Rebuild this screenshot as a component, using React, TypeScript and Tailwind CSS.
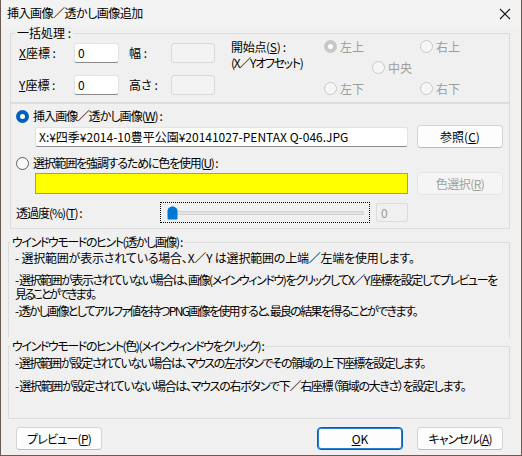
import React from "react";

function Radio({ checked, disabled }: { checked?: boolean; disabled?: boolean }) {
  if (disabled) {
    return checked ? (
      <span className="w-[13px] h-[13px] rounded-full bg-[#c8c8c8] flex items-center justify-center shrink-0">
        <span className="w-[5px] h-[5px] rounded-full bg-white" />
      </span>
    ) : (
      <span className="w-[13px] h-[13px] rounded-full border border-[#c8c8c8] bg-[#f6f6f6] shrink-0" />
    );
  }
  return checked ? (
    <span className="w-[13px] h-[13px] rounded-full bg-[#005fb8] flex items-center justify-center shrink-0">
      <span className="w-[5px] h-[5px] rounded-full bg-white" />
    </span>
  ) : (
    <span className="w-[13px] h-[13px] rounded-full border border-[#5f5f5f] bg-[#f9f9f9] shrink-0" />
  );
}

function DRadio({ label, checked }: { label: string; checked?: boolean }) {
  return (
    <div className="flex items-center gap-[3px] h-[21px] text-[#9d9d9d]">
      <Radio disabled checked={checked} />
      <span>{label}</span>
    </div>
  );
}

function Btn({ children, w = "w-[86px]", disabled, primary }: { children: React.ReactNode; w?: string; disabled?: boolean; primary?: boolean }) {
  let cls = "h-[23px] rounded-[4px] flex items-center justify-center text-[12px] shrink-0 " + w + " ";
  if (disabled) cls += "border border-[#e5e5e5] bg-[#f5f5f5] text-[#a0a0a0]";
  else if (primary) cls += "border border-[#005fb8] shadow-[inset_0_0_0_1px_#2a7fd0] bg-[#fdfdfd] text-black";
  else cls += "border border-[#d5d5d5] border-b-[#bcbcbc] bg-[#fdfdfd] text-black";
  return <div className={cls}>{children}</div>;
}

export default function App() {
  return (
    <div className="w-[522px] h-[456px] bg-[#f0f0f0] border-x border-b border-[#6b5b52] flex flex-col text-[12px] text-black font-['Noto_Sans_CJK_JP',sans-serif] [font-feature-settings:'palt'] overflow-hidden">
      {/* title bar */}
      <div className="h-[25px] bg-[#f3f3f3] flex items-start justify-between shrink-0">
        <div className="pl-[6px] pt-[5px] leading-[16px] tracking-[-0.5px]">挿入画像／透かし画像追加</div>
        <svg width="12" height="12" viewBox="0 0 12 12" className="mt-[8px] mr-[10px]">
          <path d="M1 1 L11 11 M11 1 L1 11" stroke="#1a1a1a" strokeWidth="1.1" />
        </svg>
      </div>

      {/* group 1 */}
      <fieldset className="mx-[9px] w-[500px] border border-[#dcdcdc] h-[78px] shrink-0">
        <legend className="ml-[4px] px-[2px] leading-[16px]">一括処理 :</legend>
        <div className="flex pl-[8px]">
          <div className="flex flex-col gap-[12px] pt-[2px]">
            <div className="flex items-center">
              <span className="w-[55px]"><u>X</u>座標 :</span>
              <div className="w-[45px] h-[20px] bg-white border border-[#e3e3e3] border-b-[#8a8a8a] rounded-[3px] pl-[3px] flex items-center">0</div>
              <span className="w-[42px] ml-[10px]">幅 :</span>
              <div className="w-[44px] h-[20px] border border-[#d9d9d9] bg-[#f3f3f3] rounded-[3px]" />
            </div>
            <div className="flex items-center">
              <span className="w-[55px]"><u>Y</u>座標 :</span>
              <div className="w-[45px] h-[20px] bg-white border border-[#e3e3e3] border-b-[#8a8a8a] rounded-[3px] pl-[3px] flex items-center">0</div>
              <span className="w-[42px] ml-[10px]">高さ :</span>
              <div className="w-[44px] h-[20px] border border-[#d9d9d9] bg-[#f3f3f3] rounded-[3px]" />
            </div>
          </div>
          <div className="w-[93px] ml-[16px] leading-[16px] -mt-[2px] whitespace-nowrap">
            <div className="tracking-[-0.3px]">開始点(<u>S</u>) :</div>
            <div className="tracking-[-1.3px]">(X／Yオフセット)</div>
          </div>
          <div className="grid grid-cols-[48px_48px_60px] -mt-[5px]">
            <DRadio label="左上" checked />
            <div />
            <DRadio label="右上" />
            <div />
            <DRadio label="中央" />
            <div />
            <DRadio label="左下" />
            <div />
            <DRadio label="右下" />
          </div>
        </div>
      </fieldset>

      {/* group 2 */}
      <div className="mx-[9px] w-[500px] border border-[#dcdcdc] h-[126px] shrink-0 pt-[4px] pl-[5px]">
        <div className="flex items-center gap-[4px] h-[16px]">
          <Radio checked />
          <span className="tracking-[-0.9px]">挿入画像／透かし画像(<u>W</u>) :</span>
        </div>
        <div className="flex items-center mt-[1px] h-[23px] pl-[19px]">
          <div className="w-[373px] h-[20px] bg-white border border-[#e3e3e3] border-b-[#8a8a8a] rounded-[3px] pl-[3px] flex items-center whitespace-nowrap overflow-hidden">
            X:¥四季¥2014-10豊平公園¥20141027-PENTAX Q-046.JPG
          </div>
          <div className="ml-[9px]">
            <Btn>参照(<u>C</u>)</Btn>
          </div>
        </div>
        <div className="flex items-center gap-[4px] h-[16px] mt-[7px]">
          <Radio />
          <span className="tracking-[-1.2px]">選択範囲を強調するために色を使用(<u>U</u>) :</span>
        </div>
        <div className="flex items-center mt-[1px] h-[23px] pl-[19px]">
          <div className="w-[373px] h-[21px] bg-[#ffff00] border border-[#9a9a9a]" />
          <div className="ml-[9px]">
            <Btn disabled><span className="tracking-[-0.5px]">色選択(<u>R</u>)</span></Btn>
          </div>
        </div>
        <div className="flex items-center mt-[7px] h-[21px]">
          <span className="w-[144px] tracking-[-1px]">透過度(%)(<u>T</u>) :</span>
          <div className="relative w-[210px] h-[21px] border border-dotted border-black flex items-center pl-[7px] pr-[5px]">
            <div className="w-full h-[4px] bg-[#e3e3e3] border border-[#d2d2d2] rounded-[1px]" />
            <svg width="11" height="14" viewBox="0 0 11 14" className="absolute left-[6px] top-[3px]">
              <path d="M0.5 4.5 Q0.5 2.5 2.5 1.5 L4.5 0.5 Q5.5 0 6.5 0.5 L8.5 1.5 Q10.5 2.5 10.5 4.5 L10.5 12.5 Q10.5 13.5 9.5 13.5 L1.5 13.5 Q0.5 13.5 0.5 12.5 Z" fill="#0078d4" />
            </svg>
          </div>
          <div className="ml-[6px] w-[32px] h-[19px] border border-[#dcdcdc] rounded-[2px] pl-[4px] flex items-center text-[#9a9a9a]">0</div>
        </div>
      </div>

      {/* group 3 */}
      <fieldset className="mt-[5px] ml-[7px] w-[502px] border border-b-0 border-[#dcdcdc] h-[104px] shrink-0">
        <legend className="ml-[1px] px-[2px] leading-[16px] tracking-[-1.4px]">ウインドウモードのヒント(透かし画像) :</legend>
        <div className="pl-[6px] pr-[4px] whitespace-nowrap">
          <div className="leading-[15px] tracking-[-0.2px]">- 選択範囲が表示されている場合、X／Y は選択範囲の上端／左端を使用します。</div>
          <div className="leading-[14px] mt-[8px]">
            <span className="tracking-[-1.45px]">- 選択範囲が表示されていない場合は、画像(メインウィンドウ)をクリックしてX／Y 座標を設定してプレビューを</span>
            <br />
            <span className="tracking-[-2.4px]">見ることができます。</span>
          </div>
          <div className="leading-[15px] mt-[2px] tracking-[-1.7px]">- 透かし画像としてアルファ値を持つPNG画像を使用すると、最良の結果を得ることができます。</div>
        </div>
      </fieldset>

      {/* group 4 */}
      <fieldset className="ml-[7px] w-[502px] border border-[#dcdcdc] h-[81px] shrink-0">
        <legend className="ml-[1px] px-[2px] leading-[16px] tracking-[-1.4px]">ウインドウモードのヒント(色)(メインウィンドウをクリック) :</legend>
        <div className="pl-[6px] pr-[4px] whitespace-nowrap">
          <div className="leading-[15px] mt-[1px] tracking-[-1.55px]">- 選択範囲が設定されていない場合は、マウスの左ボタンでその領域の上下座標を設定します。</div>
          <div className="leading-[15px] mt-[8px] tracking-[-1.3px]">- 選択範囲が設定されていない場合は、マウスの右ボタンで下／右座標（領域の大きさ）を設定します。</div>
        </div>
      </fieldset>

      {/* buttons */}
      <div className="flex items-center mt-[8px] pl-[15px] pr-[18px] shrink-0">
        <Btn><span className="tracking-[-0.8px]">プレビュー(<u>P</u>)</span></Btn>
        <div className="flex-1" />
        <Btn primary><u>O</u>K</Btn>
        <div className="ml-[14px]">
          <Btn><span className="tracking-[-0.8px]">キャンセル(<u>A</u>)</span></Btn>
        </div>
      </div>
    </div>
  );
}
